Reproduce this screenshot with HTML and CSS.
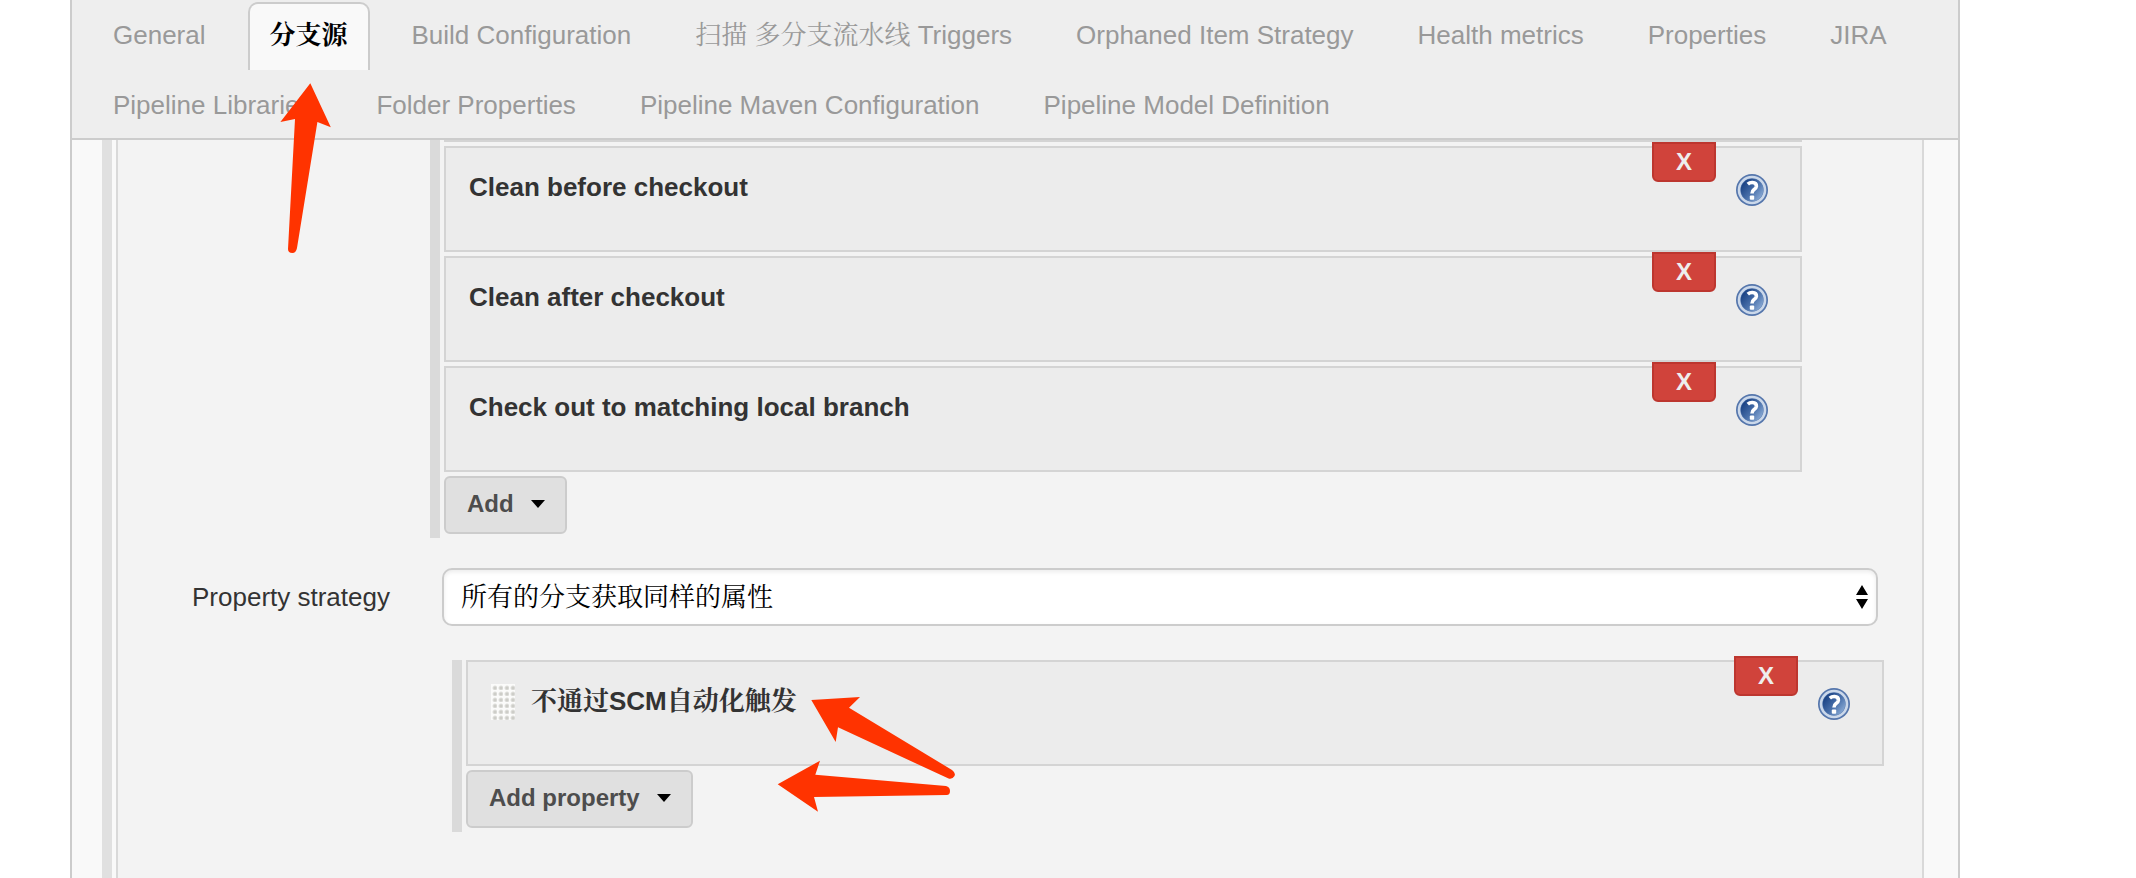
FILE: index.html
```html
<!DOCTYPE html>
<html lang="zh-CN">
<head>
<meta charset="utf-8">
<title>分支源</title>
<link rel="stylesheet" href="styles.css">
</head>
<body>
<svg class="defs" aria-hidden="true">
  <defs>
    <linearGradient id="help-fill" x1="0" y1="0.1" x2="1" y2="0.9">
      <stop offset="0.15" stop-color="#1f4788"/>
      <stop offset="0.55" stop-color="#4a71ab"/>
      <stop offset="1" stop-color="#94b4dc"/>
    </linearGradient>
    <symbol id="help" viewBox="0 0 32 32">
      <circle cx="16" cy="16" r="16" fill="#5576ac"/>
      <circle cx="16" cy="16" r="13" fill="#5f80b4" stroke="#cbd8ea" stroke-width="2.6"/>
      <circle cx="16" cy="16" r="11.2" fill="url(#help-fill)"/>
      <path d="M11.8 10.2Q13.8 8.4 16.4 8.5Q20.6 8.8 20.4 12.2Q20.2 14.2 17.8 15.8Q16 17 16 19.6" fill="none" stroke="#fff" stroke-width="3.6"/>
      <rect x="13.8" y="21.6" width="4.4" height="4.2" rx="1" fill="#fff"/>
    </symbol>
  </defs>
</svg>

<main class="config">
  <header class="tab-bar">
    <nav class="tabs" role="tablist">
      <button class="tab" type="button" role="tab">General</button>
      <button class="tab tab-active" type="button" role="tab" aria-selected="true">分支源</button>
      <button class="tab" type="button" role="tab">Build Configuration</button>
      <button class="tab" type="button" role="tab">扫描 多分支流水线 Triggers</button>
      <button class="tab" type="button" role="tab">Orphaned Item Strategy</button>
      <button class="tab" type="button" role="tab">Health metrics</button>
      <button class="tab" type="button" role="tab">Properties</button>
      <button class="tab" type="button" role="tab">JIRA</button>
      <button class="tab" type="button" role="tab">Pipeline Libraries</button>
      <button class="tab" type="button" role="tab">Folder Properties</button>
      <button class="tab" type="button" role="tab">Pipeline Maven Configuration</button>
      <button class="tab" type="button" role="tab">Pipeline Model Definition</button>
    </nav>
  </header>

  <div class="source">
    <div class="source-body">
      <section class="group behaviours">
        <div class="entry-edge"></div>
        <div class="entry">
          <b class="entry-title">Clean before checkout</b>
          <button class="delete" type="button">X</button>
          <a class="help" href="#" aria-label="Help"><svg class="help-icon"><use href="#help"/></svg></a>
        </div>
        <div class="entry">
          <b class="entry-title">Clean after checkout</b>
          <button class="delete" type="button">X</button>
          <a class="help" href="#" aria-label="Help"><svg class="help-icon"><use href="#help"/></svg></a>
        </div>
        <div class="entry">
          <b class="entry-title">Check out to matching local branch</b>
          <button class="delete" type="button">X</button>
          <a class="help" href="#" aria-label="Help"><svg class="help-icon"><use href="#help"/></svg></a>
        </div>
        <button class="add" type="button">Add
          <svg class="caret" viewBox="0 0 14 8"><path d="M0 0H14L7 8Z"/></svg>
        </button>
      </section>

      <div class="field">
        <label class="field-label" for="strategy">Property strategy</label>
        <div class="select-wrap">
          <select class="select" id="strategy">
            <option>所有的分支获取同样的属性</option>
          </select>
          <svg class="select-arrows" viewBox="0 0 12 24"><path d="M0 10L6 0L12 10ZM0 14H12L6 24Z"/></svg>
        </div>
      </div>

      <section class="group properties">
        <div class="entry">
          <span class="handle"></span>
          <b class="entry-title">不通过SCM自动化触发</b>
          <button class="delete" type="button">X</button>
          <a class="help" href="#" aria-label="Help"><svg class="help-icon"><use href="#help"/></svg></a>
        </div>
        <button class="add" type="button">Add property
          <svg class="caret" viewBox="0 0 14 8"><path d="M0 0H14L7 8Z"/></svg>
        </button>
      </section>
    </div>
  </div>
</main>

<svg class="annotations" aria-hidden="true">
  <path d="M310.3 83.3L330.8 127.3L317.4 122L297 248Q296 253 292.4 253Q288 253 288 249L295 119L280.4 122Z"/>
  <path d="M811.3 700L860 697L849 707.7L952 770Q956 773 954.5 776Q952 780 948 778.3L838 727.3L835.7 742Z"/>
  <path d="M777.7 784.3L820 760.7L815.3 774.7L946 786Q950 787 950 791Q950 795 946.7 795L814 797L818 811.7Z"/>
</svg>
</body>
</html>
```

FILE: styles.css
```css
* {
  box-sizing: border-box;
}

body {
  margin: 0;
  background: #fff;
  color: #333;
  font: 26px/30px "Liberation Sans", Arial, "Noto Serif CJK SC", "Noto Sans CJK SC", sans-serif;
  overflow: hidden;
}

button,
select {
  margin: 0;
  font: inherit;
  cursor: pointer;
}

.defs {
  position: absolute;
  width: 0;
  height: 0;
}

.config {
  display: flex;
  flex-direction: column;
  min-height: 100vh;
  margin: 0 176px 0 70px;
  border: solid #ccc;
  border-width: 0 2px;
  background: #f9f9f9;
}

/* Tabs */

.tab-bar {
  border-bottom: 2px solid #ccc;
  background: #eee;
}

.tabs {
  display: flex;
  flex-wrap: wrap;
  gap: 2px 20px;
  margin-bottom: -2px;
  padding: 2px 19px 0;
}

.tab {
  padding: 16px 20px 20px;
  border: 2px solid transparent;
  border-bottom: 0;
  border-radius: 10px 10px 0 0;
  background: none;
  color: #999;
}

.tab-active {
  border-color: #ccc;
  background: #f9f9f9;
  color: #000;
  font-weight: bold;
}

/* Branch source */

.source {
  display: flex;
  flex: 1;
  margin: 0 34px 0 30px;
  padding-left: 4px;
  border-left: 10px solid #e0e0e0;
}

.source-body {
  flex: 1;
  border: solid #d9d9d9;
  border-width: 0 2px;
  background: #f3f3f3;
}

.group {
  display: flex;
  flex-direction: column;
  align-items: stretch;
  gap: 4px;
  padding: 0 0 4px 4px;
  border-left: 10px solid #dadada;
}

.behaviours {
  margin: 0 120px 30px 312px;
}

.properties {
  margin: 0 38px 0 334px;
}

.entry-edge {
  height: 2px;
  background: #d4d4d4;
}

.entry {
  position: relative;
  display: flex;
  align-items: flex-start;
  height: 106px;
  padding: 24px 32px 0 23px;
  border: 2px solid #d4d4d4;
  background: #ececec;
}

.entry-title {
  flex: 1;
}

.delete {
  position: absolute;
  top: -6px;
  right: 84px;
  width: 64px;
  height: 40px;
  padding: 0;
  border: 2px solid #bd362f;
  border-radius: 0 0 6px 6px;
  background: #d0433b;
  color: #eee;
  font-size: 24px;
  font-weight: bold;
}

.help {
  margin-top: 2px;
}

.help-icon {
  display: block;
  width: 32px;
  height: 32px;
}

.handle {
  width: 24px;
  height: 36px;
  margin: -2px 16px 0 0;
  background: radial-gradient(circle at 4px 4px, #cdcdc8 1px, #e2e2df 2px, #fbfbfa 3px) 0 0 / 6px 6px;
}

.add {
  display: flex;
  align-items: center;
  align-self: flex-start;
  gap: 17px;
  height: 58px;
  padding: 0 20px 2px 21px;
  border: 2px solid #ccc;
  border-radius: 6px;
  background: #e0e0e0;
  color: #4d4d4d;
  font-size: 24px;
  font-weight: bold;
}

.caret {
  width: 14px;
  height: 8px;
}

/* Property strategy */

.field {
  display: flex;
  align-items: center;
  margin-bottom: 34px;
  padding: 0 44px 0 74px;
}

.field-label {
  width: 250px;
}

.select-wrap {
  position: relative;
  flex: 1;
}

.select {
  display: block;
  width: 100%;
  height: 58px;
  padding: 0 48px 0 17px;
  border: 2px solid #ccc;
  border-radius: 10px;
  appearance: none;
  background: #fff;
  box-shadow: inset 0 2px 4px rgba(0, 0, 0, 0.08);
  color: #000;
}

.select-arrows {
  position: absolute;
  top: 17px;
  right: 10px;
  width: 12px;
  height: 24px;
  pointer-events: none;
}

/* Red pointers drawn over the form */

.annotations {
  position: absolute;
  top: 0;
  left: 0;
  width: 100%;
  height: 100%;
  fill: #f30;
  pointer-events: none;
}
```
